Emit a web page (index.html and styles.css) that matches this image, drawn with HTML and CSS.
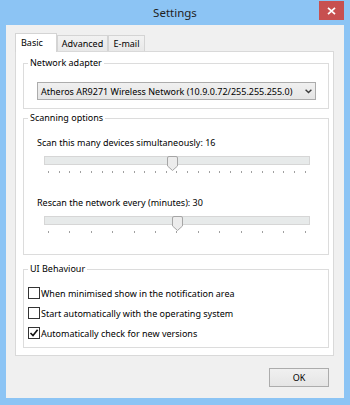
FILE: index.html
```html
<!DOCTYPE html>
<html lang="en">
<head>
    <meta charset="UTF-8">
    <title>Settings</title>
    <link rel="stylesheet" href="styles.css">
</head>
<body>
    <div class="window">
        <div class="titlebar">
            <span class="title">Settings</span>
            <div class="close">
                <svg width="9" height="8" viewBox="0 0 9 8"><path d="M1 0.8 L8 7.2 M8 0.8 L1 7.2" stroke="#fff" stroke-width="1.7" fill="none"/></svg>
            </div>
        </div>

        <div class="client">
            <div class="tabs">
                <div class="tab active tab-basic">Basic</div>
                <div class="tab tab-advanced">Advanced</div>
                <div class="tab tab-email">E-mail</div>
            </div>

            <div class="panel">
                <div class="group group-network">
                    <div class="group-title">Network adapter</div>
                    <div class="combo">
                        <span>Atheros AR9271 Wireless Network (10.9.0.72/255.255.255.0)</span>
                        <svg width="7" height="5" viewBox="0 0 7 5"><path d="M0.6 0.8 L3.5 3.6 L6.4 0.8" stroke="#3c3c3c" stroke-width="1.4" fill="none"/></svg>
                    </div>
                </div>

                <div class="group group-scan">
                    <div class="group-title">Scanning options</div>
                    <div class="slider-label first">Scan this many devices simultaneously: 16</div>
                    <div class="slider">
                        <div class="track"></div>
                        <div class="ticks">
                            <span></span><span></span><span></span><span></span><span></span>
                            <span></span><span></span><span></span><span></span><span></span>
                            <span></span><span></span><span></span><span></span><span></span>
                            <span></span><span></span><span></span><span></span><span></span>
                            <span></span><span></span><span></span><span></span><span></span>
                        </div>
                        <svg class="thumb" style="--f: 0.4839" width="11" height="15" viewBox="0 0 11 15"><path d="M0.5 2 Q0.5 0.5 2 0.5 H9 Q10.5 0.5 10.5 2 V10 L5.5 14.5 L0.5 10 Z" fill="#ececec" stroke="#a6a6a6"/></svg>
                    </div>

                    <div class="slider-label second">Rescan the network every (minutes): 30</div>
                    <div class="slider">
                        <div class="track"></div>
                        <div class="ticks">
                            <span></span><span></span><span></span><span></span><span></span>
                            <span></span><span></span><span></span><span></span><span></span>
                            <span></span><span></span><span></span>
                        </div>
                        <svg class="thumb" style="--f: 0.5" width="11" height="15" viewBox="0 0 11 15"><path d="M0.5 2 Q0.5 0.5 2 0.5 H9 Q10.5 0.5 10.5 2 V10 L5.5 14.5 L0.5 10 Z" fill="#ececec" stroke="#a6a6a6"/></svg>
                    </div>
                </div>

                <div class="group group-ui">
                    <div class="group-title">UI Behaviour</div>
                    <div class="checks">
                        <div class="check"><span class="box"></span>When minimised show in the notification area</div>
                        <div class="check"><span class="box"></span>Start automatically with the operating system</div>
                        <div class="check"><span class="box"><svg width="10" height="10" viewBox="0 0 10 10"><path d="M1.5 5 L4 7.6 L8.6 1.8" stroke="#111" stroke-width="1.6" fill="none"/></svg></span>Automatically check for new versions</div>
                    </div>
                </div>
            </div>

            <div class="footer">
                <button class="btn-ok">OK</button>
            </div>
        </div>
    </div>
</body>
</html>
```

FILE: styles.css
```css
body {
    margin: 0;
    font-family: "Noto Sans", "Liberation Sans", sans-serif;
    font-size: 9px;
    color: #000;
    background-color: #8cc4f4;
}
.window {
    width: 350px;
    height: 405px;
}
.titlebar {
    position: relative;
    height: 25px;
    line-height: 25px;
    text-align: center;
    font-size: 11.5px;
    color: #222;
}
.close {
    position: absolute;
    top: 1px;
    right: 6px;
    width: 25px;
    height: 19px;
    background-color: #c75050;
    display: flex;
    align-items: center;
    justify-content: center;
}
.client {
    margin: 0 6px;
    height: 373px;
    box-sizing: border-box;
    padding-top: 8px;
    background-color: #f0f0f0;
}

/* tabs */
.tabs {
    display: flex;
    align-items: flex-end;
    height: 18px;
    padding-left: 9px;
}
.tab {
    height: 16px;
    box-sizing: border-box;
    border: 1px solid #d4d4d4;
    border-bottom: none;
    background: linear-gradient(#f2f2f2, #e8e8e8);
    line-height: 15px;
    text-align: center;
}
.tab.active {
    position: relative;
    z-index: 1;
    height: 19px;
    margin-bottom: -1px;
    padding-left: 5px;
    line-height: 17px;
    text-align: left;
    background: #fff;
}
.tab-basic { width: 42px; }
.tab-advanced { width: 51px; }
.tab-email { width: 37px; }

.panel {
    height: 305px;
    box-sizing: border-box;
    margin: 0 10px 0 9px;
    padding: 0 4px 0 7px;
    border: 1px solid #d9d9d9;
    background-color: #fff;
}

/* group boxes */
.group {
    border: 1px solid #dcdcdc;
    padding: 0 4px;
}
.group-title {
    display: table;
    margin-top: -8px;
    padding: 0 2px;
    line-height: 14px;
    background-color: #fff;
}
.group-network { margin-top: 11px; padding-bottom: 8px; }
.group-scan { margin-top: 9px; padding-bottom: 18px; }
.group-ui { margin-top: 14px; padding-bottom: 4px; }

.combo {
    display: flex;
    align-items: center;
    justify-content: space-between;
    height: 18px;
    box-sizing: border-box;
    margin: 12px 8px 0 9px;
    padding: 0 3px 0 3px;
    border: 1px solid #acacac;
    background: linear-gradient(#f0f0f0, #e5e5e5);
}

/* sliders */
.slider-label {
    margin-left: 9px;
    line-height: 14px;
}
.slider-label.first { margin-top: 11px; }
.slider-label.second { margin-top: 20px; }
.slider {
    position: relative;
    height: 20px;
    margin: 6px 14px 0 16px;
}
.track {
    height: 9px;
    margin-top: 2px;
    box-sizing: border-box;
    border: 1px solid #d6d6d6;
    background-color: #e7eaea;
}
.ticks {
    display: flex;
    justify-content: space-between;
    margin-top: 6px;
    padding: 0 4px;
}
.ticks span {
    width: 1px;
    height: 2px;
    background-color: #a0a0a0;
}
.thumb {
    position: absolute;
    top: 0;
    left: calc(4px + (100% - 9px) * var(--f) - 5px);
}

/* checkboxes */
.checks { margin-top: 7px; }
.check {
    display: flex;
    align-items: center;
    height: 20px;
}
.box {
    display: flex;
    align-items: center;
    justify-content: center;
    width: 12px;
    height: 12px;
    box-sizing: border-box;
    margin-right: 1px;
    border: 1px solid #333;
    background-color: #fff;
}

.footer {
    display: flex;
    justify-content: flex-end;
    padding: 12px 15px 0 0;
}
.btn-ok {
    width: 60px;
    height: 19px;
    padding: 0;
    border: 1px solid #acacac;
    background: linear-gradient(#f0f0f0, #e5e5e5);
    font-family: inherit;
    font-size: 9px;
    color: #000;
}
```
